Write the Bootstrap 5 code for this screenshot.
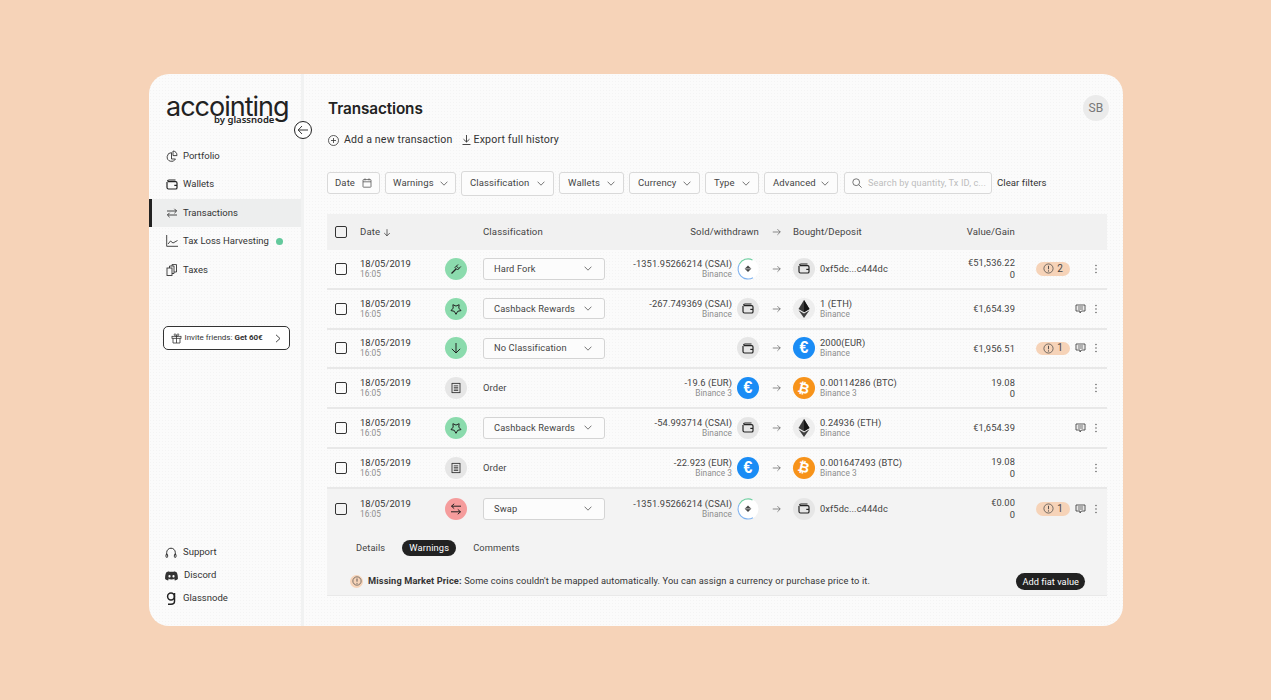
<!DOCTYPE html>
<html lang="en"><head><meta charset="utf-8"><title>Transactions</title>
<link href="https://cdn.jsdelivr.net/npm/bootstrap@5.3.0/dist/css/bootstrap.min.css" rel="stylesheet">
<style>
html,body{height:100%}
body{background:#f6d3b8;font-family:Roboto,"Liberation Sans",sans-serif;font-size:10px;color:#333;letter-spacing:.1px;overflow:hidden}
svg{flex:none}
.stage{height:700px;padding-top:74px;padding-left:149px}
.app-win{width:974px;height:552px;border-radius:20px;overflow:hidden;background-color:#fbfbfb;background-image:radial-gradient(#f4f4f4 .6px,transparent .7px);background-size:3px 3px;position:relative}
.side{width:155px;border-right:3px solid #f1f2f2;flex:none}
.logo-w{padding:20px 0 0 17px;height:67.5px;line-height:1}
.logo-a{font-family:Inter,sans-serif;font-weight:400;font-size:27px;color:#222;letter-spacing:-1px;display:block;line-height:26px}
.logo-b{font-family:"Noto Sans",sans-serif;font-weight:600;font-size:9.5px;color:#222;display:block;padding-left:48px;margin-top:-5px;letter-spacing:0}
.collapse-b{position:absolute;left:145px;top:47px;width:18px;height:18px;border:1px solid #222;border-radius:50%;background:#fff;padding:0;display:flex;align-items:center;justify-content:center}
.side .nav-link{height:28.5px;padding:0 0 0 17px;display:flex;align-items:center;gap:5px;color:#333;font-size:9.5px;letter-spacing:0}
.side .nav-link.on{background:#edeeee;box-shadow:inset 3px 0 0 #222}
.dot-g{width:7px;height:7px;border-radius:50%;background:#63c99c;margin-left:2px}
.invite{margin:42px 0 0 13.5px;width:127px;height:24px;border:1px solid #333;border-radius:5px;display:flex;align-items:center;padding:0 8px 0 7px;font-size:8px;gap:3px;background:#fff;color:#333;letter-spacing:0;white-space:nowrap}
.side .foot-l .nav-link{height:23px;padding:0 0 0 16px;gap:6px}
.foot-l{padding-bottom:16px}
.ttl{font-family:Inter,sans-serif;font-size:15.3px;font-weight:600;color:#222;margin:0;letter-spacing:-.1px;line-height:20px;padding-top:2px}
.avatar{width:26px;height:26px;background:#ebebeb;border-radius:50%;color:#777;font-size:12px;display:flex;align-items:center;justify-content:center;letter-spacing:.2px}
.main-p{padding:21px 11px 0 23px;min-width:0;width:816px}
.head-r{height:26px;padding-left:1px}
.acts{margin-top:12px;height:14px;gap:10px;padding-left:1px;font-size:10.6px;letter-spacing:.16px;color:#333}
.acts span{display:flex;align-items:center;gap:5px}
.acts .exp{gap:2px}
.filt{margin-top:23px;height:26px;gap:5px;align-items:center}
.fb{height:22px;border:1px solid #d9d9d9;border-radius:3px;background:#fcfcfc;display:flex;align-items:center;padding:0 7px;color:#444;font-size:9.5px;letter-spacing:.12px;justify-content:space-between;white-space:nowrap;flex:none}
.w-date{width:53px}.w-warn{width:71px}.w-class{width:93px;height:25px;padding:0 8px}.w-wall{width:65px;padding:0 8px}.w-cur{width:71px;padding:0 8px}.w-typ{width:54px;padding:0 8px}.w-adv{width:74px;padding:0 8px}
.w-srch{width:148px;margin-left:1px;justify-content:flex-start;gap:6px;color:#bdbdbd;font-size:9.2px;letter-spacing:.1px}
.clr{font-size:9.6px;color:#333;letter-spacing:.05px}
.tx{width:780px;margin-top:18px}
.tx-h,.tx-r{display:grid;grid-template-columns:33px 85px 38px 122px 127px 5px 22px 34px 22px 5px 130px 65px 21px 34px 5px 12px 20px;align-items:center}
.tx-h{background:#f1f1f1;height:36px;font-size:9.6px;color:#444;letter-spacing:.12px}
.h-sold{grid-column:5/8;text-align:right}
.h-bought{grid-column:9/12}
.tx-r{height:39.75px;border-bottom:2px solid #e8e8e8}
.cbx.form-check-input{width:12px;height:12px;margin:0 0 0 8px;border:1.5px solid #333;border-radius:2px;background-color:transparent;float:none}
.dt{font-size:9.4px;line-height:11px;color:#333;letter-spacing:.1px}
.sub{font-size:8.3px;color:#8d8d8d;line-height:11px;display:block;letter-spacing:.05px}
.ic{width:22px;height:22px;border-radius:50%;display:flex;align-items:center;justify-content:center;flex:none}
.g-ic{background:#8bdbad}.x-ic{background:#e6e6e6}.r-ic{background:#f59c9c}
.eu{background:#1a8cf5;color:#fff;font-weight:700;font-size:16px;letter-spacing:0;font-family:"Liberation Sans",sans-serif}
.bt{background:#f7931a;color:#fff;font-weight:700;font-size:14px;letter-spacing:0;font-family:"DejaVu Sans",sans-serif}
.bt span{display:block;transform:rotate(14deg)}
.sel{height:21.5px;width:122px;border:1px solid #d4d4d4;border-radius:3px;background:#fcfcfc;display:flex;align-items:center;justify-content:space-between;padding:0 12px 0 10px;font-size:9.3px;color:#444;letter-spacing:.12px}
.ord{font-size:9.4px;color:#444;letter-spacing:.12px}
.am{text-align:right;line-height:11px;font-size:9.3px;color:#444}
.bo{line-height:11px;font-size:9.3px;color:#444;white-space:nowrap}
.val{text-align:right;line-height:11.5px;font-size:9.3px;color:#444}
.wbd.badge{background:#f6d3b8;color:#444;border-radius:10px;height:13.5px;width:34px;font-size:10px;font-weight:400;padding:0;display:flex;align-items:center;justify-content:center;gap:3px;letter-spacing:0}
.more{display:flex;justify-content:center;padding-right:2px}
.detail{background:#f3f3f3;border-bottom:1px solid #e9e9e9}
.tx-r.op{background:#f3f3f3;border-bottom:0;height:40.5px}
.tabs-t{gap:6px;padding:10px 0 0 22px;height:28px;align-items:center}
.tabs-t .nav-link{padding:0 7px;height:16px;line-height:16px;border-radius:8px;color:#444;font-size:9.3px;letter-spacing:.12px}
.tabs-t .nav-link.active{background:#222;color:#fff;margin:0 4px}
.warnl{padding:10px 22px 0 23px;height:38px;font-size:9.25px;color:#333;align-items:center;letter-spacing:.12px}
.warnl b{font-weight:700}
.w-i{width:13px;height:13px;border-radius:50%;background:#f6d3b8;display:flex;align-items:center;justify-content:center;margin-right:5px;flex:none}
.fiat{background:#222;color:#fff;border-radius:8.5px;height:17px;padding:0 6px;font-size:9.2px;line-height:17px;margin-left:auto;border:0;letter-spacing:.05px}
</style></head>
<body>
<svg width="0" height="0" class="position-absolute">
<defs>
<symbol id="chev" viewBox="0 0 8 5"><path d="M.6.7 4 4.2 7.4.7" fill="none" stroke="#555" stroke-width=".8"/></symbol>
<symbol id="wal" viewBox="0 0 12 11"><path d="M1.500 2.500C1.500 1.500 2 1 3 1h6.500M1 3v5.500C1 9.600 1.600 10 2.600 10h7c.9 0 1.400-.5 1.400-1.300V4c0-.8-.5-1.300-1.400-1.300H2" fill="none" stroke="#222" stroke-width="1.200"/><path d="M8.300 6.400H11" stroke="#222" stroke-width="1.200"/></symbol>
<symbol id="arr" viewBox="0 0 12 10"><path d="M1 5h10M7.200 1.200 11 5 7.200 8.800" fill="none" stroke="#444" stroke-width=".8"/></symbol>
<symbol id="fork" viewBox="0 0 12 12"><path d="M1.500 10.500 6 6" fill="none" stroke="#222" stroke-width="1.300"/><path d="M5 4.500 7.500 7 10.800 3.500M6.500 3.200 8.800 5.500M5 4.500 8 1.500" fill="none" stroke="#222" stroke-width="1"/></symbol>
<symbol id="star" viewBox="0 0 12 12"><path d="M9.100 1.700 8.800 5.100 11 7.600 7.700 8.300 6 11.300 4.300 8.300 1 7.600 3.200 5.100 2.900 1.700 6 3.100Z" fill="none" stroke="#222" stroke-width="1"/></symbol>
<symbol id="dn" viewBox="0 0 12 12"><path d="M6 1v10M1.800 6.800 6 11l4.200-4.200" fill="none" stroke="#222" stroke-width="1"/></symbol>
<symbol id="rec" viewBox="0 0 12 12"><path d="M2 1 3 1.800 4 1 5 1.800 6 1 7 1.800 8 1 9 1.800 10 1V11L9 10.200 8 11 7 10.200 6 11 5 10.200 4 11 3 10.200 2 11Z" fill="none" stroke="#333" stroke-width=".9"/><path d="M3.800 3.800h4.400M3.800 5.400h4.400M3.800 7h4.400M3.800 8.500h4.400" stroke="#333" stroke-width=".8"/></symbol>
<symbol id="swp" viewBox="0 0 12 12"><path d="M11 3.200H1.500M4.200.8 1.500 3.200 4.200 5.600M1 8.800h9.500M7.800 6.400l2.700 2.400-2.700 2.400" fill="none" stroke="#222" stroke-width="1"/></symbol>
<symbol id="csai" viewBox="0 0 22 22"><circle cx="11" cy="11" r="10.500" fill="#fff"/><path d="M15.500 1.900A10 10 0 0 0 2.400 6" fill="none" stroke="#71cfa2" stroke-width="1.100"/><path d="M2.400 6A10 10 0 0 0 16 19.700" fill="none" stroke="#7fb2ef" stroke-width="1.100"/><path d="M11 7.500 14.300 10.800 11 14.100 7.700 10.800Z" fill="#444"/><path d="M8.200 10.800h5.600" stroke="#fff" stroke-width=".6"/></symbol>
<symbol id="eth" viewBox="0 0 22 22"><circle cx="11" cy="11" r="11" fill="#eee"/><path d="M11 2 5.500 11 11 14.200 16.500 11Z" fill="#3a3a3a"/><path d="M11 2V14.200L16.500 11Z" fill="#161616"/><path d="M5.500 12.200 11 20 16.500 12.200 11 15.400Z" fill="#404040"/></symbol>
<symbol id="warn" viewBox="0 0 12 12"><circle cx="6" cy="6" r="5" fill="none" stroke="#444" stroke-width=".8"/><path d="M6 3v3.800" stroke="#444" stroke-width="1"/><circle cx="6" cy="8.600" r=".6" fill="#444"/></symbol>
<symbol id="cmt" viewBox="0 0 11 10"><path d="M1 1h9v6H6.500L5 9V7H1Z" fill="none" stroke="#444" stroke-width=".9"/><path d="M2.800 3h5.400M2.800 5h5.400" stroke="#444" stroke-width=".8"/></symbol>
<symbol id="dots" viewBox="0 0 2 10"><circle cx="1" cy="1.500" r=".65" fill="#444"/><circle cx="1" cy="5" r=".65" fill="#444"/><circle cx="1" cy="8.500" r=".65" fill="#444"/></symbol>
</defs></svg>
<div class="stage">
<div class="app-win d-flex">
<aside class="side d-flex flex-column">
<div class="logo-w"><span class="logo-a">accointing</span><span class="logo-b">by glassnode</span></div>
<nav class="nav flex-column">
<a class="nav-link" href="#"><svg width="12" height="12" viewBox="0 0 12 12" fill="none" stroke="#333" stroke-width=".9"><path d="M5.500 2.600a4.400 4.400 0 1 0 4 6.400H5.500Z"/><path d="M7 1v4.600h4A4.600 4.600 0 0 0 7 1Z"/></svg>Portfolio</a>
<a class="nav-link" href="#"><svg width="12" height="11"><use href="#wal"/></svg>Wallets</a>
<a class="nav-link on" href="#"><svg width="12" height="10" viewBox="0 0 12 10" fill="none" stroke="#333" stroke-width=".9"><path d="M1 3h9.500M8.400.8 10.600 3 8.400 5.200M11 7H1.500M3.600 4.800 1.400 7l2.200 2.200"/></svg>Transactions</a>
<a class="nav-link" href="#"><svg width="12" height="12" viewBox="0 0 12 12" fill="none" stroke="#333" stroke-width=".9"><path d="M.7 0v11.300H12"/><path d="M2 9 4.500 6 7 8 11.500 5.500"/></svg>Tax Loss Harvesting<span class="dot-g"></span></a>
<a class="nav-link" href="#"><svg width="12" height="12" viewBox="0 0 12 12" fill="none" stroke="#333" stroke-width=".9"><rect x="1" y="4" width="5" height="7.500"/><path d="M3.500 4V2H8v7.500H6M6 2V.6h4.500V8H8"/></svg>Taxes</a>
</nav>
<div class="invite"><svg width="11" height="11" viewBox="0 0 11 11" fill="none" stroke="#333" stroke-width=".8"><rect x="1" y="3.300" width="9" height="2"/><path d="M2 5.300V10h7V5.300M5.500 3.300V10M5.500 3.300C3 3.300 2.800.6 4 .8c.9.1 1.500 1.500 1.500 2.500.1-1 .6-2.400 1.500-2.500 1.200-.2 1 2.500-1.500 2.500Z"/></svg><span>Invite friends: <b>Get 60€</b></span><svg class="ms-auto" width="6" height="9" viewBox="0 0 6 9"><path d="M1 .8 5 4.500 1 8.200" fill="none" stroke="#333" stroke-width=".9"/></svg></div>
<nav class="nav flex-column mt-auto foot-l">
<a class="nav-link" href="#"><svg width="12" height="12" viewBox="0 0 12 12" fill="none" stroke="#333" stroke-width="1"><path d="M1.700 8V5.500a4.300 4.300 0 0 1 8.600 0V8"/><rect x="1" y="7.200" width="1.600" height="3.200" rx=".7"/><rect x="9.400" y="7.200" width="1.600" height="3.200" rx=".7"/></svg>Support</a>
<a class="nav-link" href="#"><svg width="13" height="10" viewBox="0 0 13 10"><path fill="#333" fill-rule="evenodd" d="M4.200.2C3 .4 2 .8 1.400 1.200.3 3 0 5.400.1 8c1 .8 2 1.300 3 1.600l.7-1.100-1-.5.3-.2c1.900.9 4.900.9 6.800 0l.3.200-1 .5.7 1.100c1-.3 2-.8 3-1.600C13 5.400 12.600 3 11.600 1.200 11 .8 10 .4 8.800.2L8.500.9C7.500.7 5.500.7 4.500.9ZM4.500 4.100a1.100 1.200 0 1 1 0 2.400 1.100 1.200 0 0 1 0-2.400ZM8.500 4.100a1.100 1.200 0 1 1 0 2.400 1.100 1.200 0 0 1 0-2.400Z"/></svg>Discord</a>
<a class="nav-link" href="#"><svg width="12" height="13" viewBox="0 0 12 13" fill="none" stroke="#222" stroke-width="1.500"><circle cx="6" cy="4.500" r="3.400"/><path d="M9.500 1v8.200c0 2-1.500 3-3.500 3H3"/></svg>Glassnode</a>
</nav>
</aside>
<button class="collapse-b" aria-label="Collapse"><svg width="12" height="10" viewBox="0 0 12 10"><path d="M11 5H1.200M5 1 1.200 5 5 9" fill="none" stroke="#222" stroke-width=".9"/></svg></button>
<main class="main-p">
<div class="d-flex justify-content-between align-items-center head-r"><h1 class="ttl">Transactions</h1><div class="avatar">SB</div></div>
<div class="d-flex acts"><span><svg width="11" height="11" viewBox="0 0 11 11" fill="none" stroke="#333" stroke-width=".8"><circle cx="5.500" cy="5.500" r="5"/><path d="M5.500 3v5M3 5.500h5"/></svg>Add a new transaction</span><span class="exp"><svg width="9" height="10" viewBox="0 0 9 10" fill="none" stroke="#333" stroke-width=".9"><path d="M4.500 0v7M1.500 4.200 4.500 7l3-2.800M.5 9.500h8"/></svg>Export full history</span></div>
<div class="d-flex filt">
<div class="fb w-date">Date<svg width="10" height="10" viewBox="0 0 10 10" fill="none" stroke="#555" stroke-width=".8"><rect x="1" y="1.600" width="8" height="7.600" rx=".6"/><path d="M1 3.800h8M3 .4v2M7 .4v2"/></svg></div>
<div class="fb w-warn">Warnings<svg width="8" height="5"><use href="#chev"/></svg></div>
<div class="fb w-class">Classification<svg width="8" height="5"><use href="#chev"/></svg></div>
<div class="fb w-wall">Wallets<svg width="8" height="5"><use href="#chev"/></svg></div>
<div class="fb w-cur">Currency<svg width="8" height="5"><use href="#chev"/></svg></div>
<div class="fb w-typ">Type<svg width="8" height="5"><use href="#chev"/></svg></div>
<div class="fb w-adv">Advanced<svg width="8" height="5"><use href="#chev"/></svg></div>
<div class="fb w-srch"><svg width="10" height="10" viewBox="0 0 10 10" fill="none" stroke="#555" stroke-width=".8"><circle cx="4.200" cy="4.200" r="3.400"/><path d="M6.700 6.700 9.600 9.600"/></svg>Search by quantity, Tx ID, c...</div>
<span class="clr">Clear filters</span>
</div>
<section class="tx">
<div class="tx-h">
<input class="form-check-input cbx" type="checkbox" aria-label="all">
<span>Date <svg width="8" height="9" viewBox="0 0 12 12"><use href="#dn"/></svg></span><span></span>
<span>Classification</span>
<span class="h-sold">Sold/withdrawn</span>
<span class="d-flex justify-content-center"><svg width="9" height="8"><use href="#arr"/></svg></span>
<span class="h-bought">Bought/Deposit</span>
<span class="text-end">Value/Gain</span>
</div>

<div class="tx-r"><input class="form-check-input cbx" type="checkbox" aria-label="row"><div class="dt">18/05/2019<span class="sub">16:05</span></div><div class="ic g-ic"><svg width="12" height="12"><use href="#fork"/></svg></div><div class="sel">Hard Fork<svg width="8" height="5"><use href="#chev"/></svg></div><div class="am">-1351.95266214 (CSAI)<span class="sub">Binance</span></div><span></span><svg width="22" height="22"><use href="#csai"/></svg><span class="d-flex justify-content-center"><svg width="9" height="8"><use href="#arr"/></svg></span><div class="ic x-ic"><svg width="12" height="11"><use href="#wal"/></svg></div><span></span><div class="bo">0xf5dc...c444dc</div><div class="val">€51,536.22<br>0</div><span></span><span class="badge wbd"><svg width="11" height="11"><use href="#warn"/></svg>2</span><span></span><span></span><span class="more"><svg width="2" height="10"><use href="#dots"/></svg></span></div>

<div class="tx-r"><input class="form-check-input cbx" type="checkbox" aria-label="row"><div class="dt">18/05/2019<span class="sub">16:05</span></div><div class="ic g-ic"><svg width="12" height="12"><use href="#star"/></svg></div><div class="sel">Cashback Rewards<svg width="8" height="5"><use href="#chev"/></svg></div><div class="am">-267.749369 (CSAI)<span class="sub">Binance</span></div><span></span><div class="ic x-ic"><svg width="12" height="11"><use href="#wal"/></svg></div><span class="d-flex justify-content-center"><svg width="9" height="8"><use href="#arr"/></svg></span><svg width="22" height="22"><use href="#eth"/></svg><span></span><div class="bo">1 (ETH)<span class="sub">Binance</span></div><div class="val">€1,654.39</div><span></span><span></span><span></span><svg width="11" height="10"><use href="#cmt"/></svg><span class="more"><svg width="2" height="10"><use href="#dots"/></svg></span></div>

<div class="tx-r"><input class="form-check-input cbx" type="checkbox" aria-label="row"><div class="dt">18/05/2019<span class="sub">16:05</span></div><div class="ic g-ic"><svg width="12" height="12"><use href="#dn"/></svg></div><div class="sel">No Classification<svg width="8" height="5"><use href="#chev"/></svg></div><div class="am"></div><span></span><div class="ic x-ic"><svg width="12" height="11"><use href="#wal"/></svg></div><span class="d-flex justify-content-center"><svg width="9" height="8"><use href="#arr"/></svg></span><div class="ic eu">€</div><span></span><div class="bo">2000(EUR)<span class="sub">Binance</span></div><div class="val">€1,956.51</div><span></span><span class="badge wbd"><svg width="11" height="11"><use href="#warn"/></svg>1</span><span></span><svg width="11" height="10"><use href="#cmt"/></svg><span class="more"><svg width="2" height="10"><use href="#dots"/></svg></span></div>

<div class="tx-r"><input class="form-check-input cbx" type="checkbox" aria-label="row"><div class="dt">18/05/2019<span class="sub">16:05</span></div><div class="ic x-ic"><svg width="12" height="12"><use href="#rec"/></svg></div><div class="ord">Order</div><div class="am">-19.6 (EUR)<span class="sub">Binance 3</span></div><span></span><div class="ic eu">€</div><span class="d-flex justify-content-center"><svg width="9" height="8"><use href="#arr"/></svg></span><div class="ic bt"><span>₿</span></div><span></span><div class="bo">0.00114286 (BTC)<span class="sub">Binance 3</span></div><div class="val">19.08<br>0</div><span></span><span></span><span></span><span></span><span class="more"><svg width="2" height="10"><use href="#dots"/></svg></span></div>

<div class="tx-r"><input class="form-check-input cbx" type="checkbox" aria-label="row"><div class="dt">18/05/2019<span class="sub">16:05</span></div><div class="ic g-ic"><svg width="12" height="12"><use href="#star"/></svg></div><div class="sel">Cashback Rewards<svg width="8" height="5"><use href="#chev"/></svg></div><div class="am">-54.993714 (CSAI)<span class="sub">Binance</span></div><span></span><div class="ic x-ic"><svg width="12" height="11"><use href="#wal"/></svg></div><span class="d-flex justify-content-center"><svg width="9" height="8"><use href="#arr"/></svg></span><svg width="22" height="22"><use href="#eth"/></svg><span></span><div class="bo">0.24936 (ETH)<span class="sub">Binance</span></div><div class="val">€1,654.39</div><span></span><span></span><span></span><svg width="11" height="10"><use href="#cmt"/></svg><span class="more"><svg width="2" height="10"><use href="#dots"/></svg></span></div>

<div class="tx-r"><input class="form-check-input cbx" type="checkbox" aria-label="row"><div class="dt">18/05/2019<span class="sub">16:05</span></div><div class="ic x-ic"><svg width="12" height="12"><use href="#rec"/></svg></div><div class="ord">Order</div><div class="am">-22.923 (EUR)<span class="sub">Binance 3</span></div><span></span><div class="ic eu">€</div><span class="d-flex justify-content-center"><svg width="9" height="8"><use href="#arr"/></svg></span><div class="ic bt"><span>₿</span></div><span></span><div class="bo">0.001647493 (BTC)<span class="sub">Binance 3</span></div><div class="val">19.08<br>0</div><span></span><span></span><span></span><span></span><span class="more"><svg width="2" height="10"><use href="#dots"/></svg></span></div>

<div class="tx-r op"><input class="form-check-input cbx" type="checkbox" aria-label="row"><div class="dt">18/05/2019<span class="sub">16:05</span></div><div class="ic r-ic"><svg width="12" height="12"><use href="#swp"/></svg></div><div class="sel">Swap<svg width="8" height="5"><use href="#chev"/></svg></div><div class="am">-1351.95266214 (CSAI)<span class="sub">Binance</span></div><span></span><svg width="22" height="22"><use href="#csai"/></svg><span class="d-flex justify-content-center"><svg width="9" height="8"><use href="#arr"/></svg></span><div class="ic x-ic"><svg width="12" height="11"><use href="#wal"/></svg></div><span></span><div class="bo">0xf5dc...c444dc</div><div class="val">€0.00<br>0</div><span></span><span class="badge wbd"><svg width="11" height="11"><use href="#warn"/></svg>1</span><span></span><svg width="11" height="10"><use href="#cmt"/></svg><span class="more"><svg width="2" height="10"><use href="#dots"/></svg></span></div>
<div class="detail">
<ul class="nav tabs-t"><li class="nav-item"><a class="nav-link" href="#">Details</a></li><li class="nav-item"><a class="nav-link active" href="#">Warnings</a></li><li class="nav-item"><a class="nav-link" href="#">Comments</a></li></ul>
<div class="d-flex warnl"><span class="w-i"><svg width="10" height="10"><use href="#warn"/></svg></span><span><b>Missing Market Price:</b> Some coins couldn't be mapped automatically. You can assign a currency or purchase price to it.</span><button class="fiat">Add fiat value</button></div>
</div>
</section>
</main>
</div>
</div>
<script src="https://cdn.jsdelivr.net/npm/bootstrap@5.3.0/dist/js/bootstrap.bundle.min.js"></script>
</body></html>
